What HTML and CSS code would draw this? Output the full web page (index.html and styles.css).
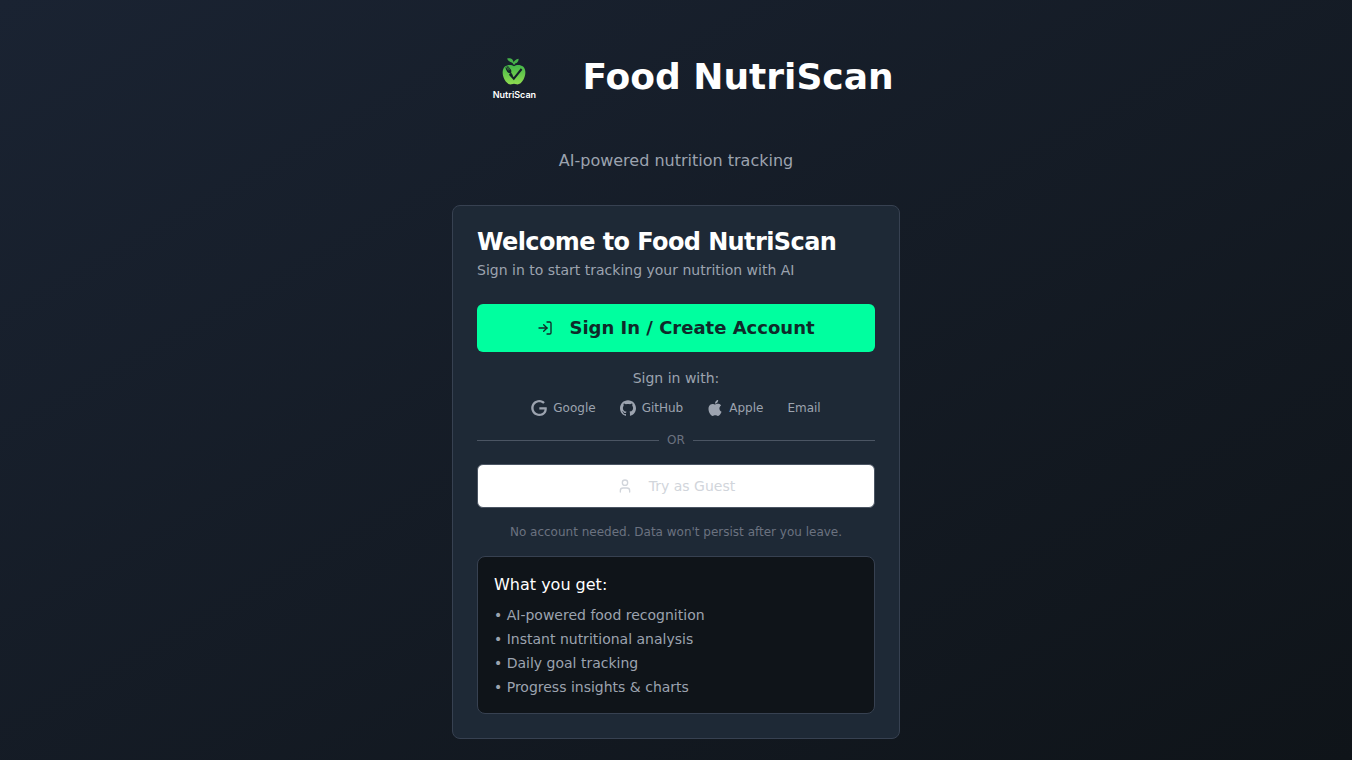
FILE: index.html
```
<!DOCTYPE html>
<html lang="en">
  <head>
    <meta charset="utf-8">
    <meta name="viewport" content="width=device-width, initial-scale=1.0">
    <title>Food NutriScan</title>
    <link rel="stylesheet" href="styles.css">
  </head>
  <body>
    <div class="page">
      <main class="container">
        <header class="hero">
          <div class="brand">
            <div class="logo">
              <svg class="logo-mark" viewBox="0 0 24 27" aria-hidden="true">
                <defs>
                  <linearGradient id="leaf" x1="0" y1="0" x2="0" y2="1">
                    <stop offset="0" stop-color="#43b649"/>
                    <stop offset="1" stop-color="#8fdc50"/>
                  </linearGradient>
                </defs>
                <path fill="#46b04a" d="M11.400 6.600C10.900 4.400 9 4.200 7.200 3.200 5.800 2.300 5.400 1.200 5.200.4c2-.3 4.200-.1 5.400 1.400.7.9.9 1.900 1 2.800C12.200 2.800 13.800 1.200 16.600.8c.2 2.500-1.400 4.200-3.400 4.700-.4.300-.5.700-.5 1.300z"/>
                <path fill="url(#leaf)" d="M12 8.200C9.800 6.600 5.600 6.200 2.900 8.600-.3 11.600.2 17.300 2.500 21.500c2 3.600 4.700 5.500 7.200 4.800.9-.3 1.500-.5 2.300-.5s1.400.2 2.300.5c2.500.7 5.200-1.200 7.200-4.800 2.300-4.200 2.800-9.900-.4-12.900-2.700-2.400-6.900-2-9.100-.4z"/>
                <path fill="none" stroke="#14202a" stroke-width="2" d="M7.600 16l4.200 4.600 7.800-9.600"/>
                <path fill="#14202a" d="M3.400 9.600l2.400-1.800 3 3.800c.7 1.100.7 2 .3 2.800l1.900 3-1 .7-2-2.900c-1.100.2-2-.2-2.600-1.100C4.600 12.800 3.900 11.300 3.400 9.600z"/>
                <path fill="none" stroke="#56be4a" stroke-width=".6" d="M4.200 9l2.400 3.400M5.200 8.200l2.400 3.400"/>
              </svg>
              <span class="logo-text">NutriScan</span>
            </div>
            <h1 class="title">Food NutriScan</h1>
          </div>
          <p class="tagline">AI-powered nutrition tracking</p>
        </header>

        <section class="card">
          <div class="card-header">
            <h2 class="card-title">Welcome to Food NutriScan</h2>
            <p class="card-desc">Sign in to start tracking your nutrition with AI</p>
          </div>

          <div class="card-content">
            <button class="btn btn-primary" type="button">
              <svg class="icon" viewBox="0 0 24 24" aria-hidden="true"><path d="M15 3h4a2 2 0 0 1 2 2v14a2 2 0 0 1-2 2h-4"/><path d="M10 17l5-5-5-5"/><path d="M15 12H3"/></svg>
              Sign In / Create Account
            </button>

            <div class="providers">
              <p class="providers-label">Sign in with:</p>
              <ul class="provider-list">
                <li class="provider">
                  <svg class="provider-icon" viewBox="0 0 24 24" aria-hidden="true"><path d="M12.480 10.920v3.280h7.840c-.24 1.840-.853 3.187-1.787 4.133-1.147 1.147-2.933 2.400-6.053 2.400-4.827 0-8.600-3.893-8.600-8.720s3.773-8.720 8.600-8.720c2.600 0 4.507 1.027 5.907 2.347l2.307-2.307C18.747 1.440 16.133 0 12.480 0 5.867 0 .307 5.387.307 12s5.560 12 12.173 12c3.573 0 6.267-1.173 8.373-3.360 2.160-2.160 2.840-5.213 2.840-7.667 0-.76-.053-1.467-.173-2.053H12.480z"/></svg>
                  Google
                </li>
                <li class="provider">
                  <svg class="provider-icon" viewBox="0 0 24 24" aria-hidden="true"><path d="M12 .297c-6.630 0-12 5.373-12 12 0 5.303 3.438 9.800 8.205 11.385.6.113.82-.258.82-.577 0-.285-.010-1.040-.015-2.040-3.338.724-4.042-1.610-4.042-1.610C4.422 18.070 3.633 17.700 3.633 17.700c-1.087-.744.084-.729.084-.729 1.205.084 1.838 1.236 1.838 1.236 1.070 1.835 2.809 1.305 3.495.998.108-.776.417-1.305.76-1.605-2.665-.3-5.466-1.332-5.466-5.930 0-1.310.465-2.380 1.235-3.220-.135-.303-.54-1.523.105-3.176 0 0 1.005-.322 3.300 1.230.96-.267 1.980-.399 3-.405 1.020.006 2.040.138 3 .405 2.280-1.552 3.285-1.230 3.285-1.230.645 1.653.24 2.873.12 3.176.765.840 1.230 1.910 1.230 3.220 0 4.610-2.805 5.625-5.475 5.920.42.360.81 1.096.81 2.220 0 1.606-.015 2.896-.015 3.286 0 .315.21.690.825.570C20.565 22.092 24 17.592 24 12.297c0-6.627-5.373-12-12-12"/></svg>
                  GitHub
                </li>
                <li class="provider">
                  <svg class="provider-icon" viewBox="0 0 24 24" aria-hidden="true"><path d="M12.152 6.896c-.948 0-2.415-1.078-3.960-1.040-2.040.027-3.910 1.183-4.961 3.014-2.117 3.675-.546 9.103 1.519 12.090 1.013 1.454 2.208 3.090 3.792 3.039 1.520-.065 2.090-.987 3.935-.987 1.831 0 2.350.987 3.960.948 1.637-.026 2.676-1.480 3.676-2.948 1.156-1.688 1.636-3.325 1.662-3.415-.039-.013-3.182-1.221-3.220-4.857-.026-3.040 2.480-4.494 2.597-4.559-1.429-2.090-3.623-2.324-4.390-2.376-2-.156-3.675 1.090-4.610 1.090zM15.530 3.830c.843-1.012 1.400-2.427 1.245-3.830-1.207.052-2.662.805-3.532 1.818-.78.896-1.454 2.338-1.273 3.714 1.338.104 2.715-.688 3.559-1.701"/></svg>
                  Apple
                </li>
                <li class="provider">Email</li>
              </ul>
            </div>

            <div class="divider">OR</div>

            <button class="btn btn-guest" type="button">
              <svg class="icon" viewBox="0 0 24 24" aria-hidden="true"><path d="M19 21v-2a4 4 0 0 0-4-4H9a4 4 0 0 0-4 4v2"/><circle cx="12" cy="7" r="4"/></svg>
              Try as Guest
            </button>

            <p class="note">No account needed. Data won't persist after you leave.</p>

            <div class="features">
              <h3 class="features-title">What you get:</h3>
              <ul class="features-list">
                <li>• AI-powered food recognition</li>
                <li>• Instant nutritional analysis</li>
                <li>• Daily goal tracking</li>
                <li>• Progress insights &amp; charts</li>
              </ul>
            </div>
          </div>
        </section>
      </main>
    </div>
  </body>
</html>
```
FILE: styles.css
```
* {
  box-sizing: border-box;
  margin: 0;
  padding: 0;
}
body {
  background-color: #0f1419;
  color: white;
  font-family: "DejaVu Sans", sans-serif;
  font-size: 16px;
  line-height: 24px;
}
ul {
  list-style: none;
}
.page {
  min-height: 100vh;
  padding: 16px;
  background: linear-gradient(to bottom right, #1a2332, #0f1419);
}
.container {
  max-width: 448px;
  margin: 0 auto;
}

/* logo and page heading */
.hero {
  text-align: center;
  margin-bottom: 32px;
}
.brand {
  display: flex;
  align-items: center;
  justify-content: center;
  gap: 12px;
  height: 121px;
  margin-bottom: 12px;
}
.logo {
  display: flex;
  flex-direction: column;
  align-items: center;
  width: 112px;
  padding-top: 5px;
  gap: 4px;
}
.logo-mark {
  width: 24px;
  height: 27px;
}
.logo-text {
  font-family: Inter, sans-serif;
  font-size: 9px;
  font-weight: 600;
  line-height: 12px;
}
.title {
  font-size: 36px;
  font-weight: 700;
  line-height: 40px;
}
.tagline {
  color: #9ca3af;
}

/* sign in card */
.card {
  background-color: #1e2936;
  border: 1px solid #374151;
  border-radius: 8px;
  padding: 24px;
}
.card-title {
  font-size: 24px;
  font-weight: 700;
  line-height: 24px;
  letter-spacing: -0.6px;
}
.card-desc {
  margin-top: 6px;
  color: #9ca3af;
  font-size: 14px;
  line-height: 20px;
}
.card-content {
  display: flex;
  flex-direction: column;
  gap: 16px;
  margin-top: 24px;
}
.btn {
  display: flex;
  align-items: center;
  justify-content: center;
  gap: 16px;
  width: 100%;
  border: 0;
  border-radius: 6px;
  font-family: inherit;
  cursor: pointer;
}
.btn-primary {
  height: 48px;
  background-color: #00ff9f;
  color: #0f2a2a;
  font-size: 18px;
  font-weight: 700;
  line-height: 28px;
}
.btn-guest {
  height: 44px;
  background-color: white;
  border: 1px solid #4b5563;
  color: #d1d5db;
  font-size: 14px;
  line-height: 20px;
}
.icon {
  width: 16px;
  height: 16px;
  fill: none;
  stroke: currentColor;
  stroke-width: 2;
  stroke-linecap: round;
  stroke-linejoin: round;
}
.providers {
  color: #9ca3af;
  text-align: center;
}
.providers-label {
  font-size: 14px;
  line-height: 20px;
}
.provider-list {
  display: flex;
  justify-content: center;
  gap: 24px;
  margin-top: 12px;
}
.provider {
  display: flex;
  align-items: center;
  gap: 6px;
  font-size: 12px;
  line-height: 16px;
}
.provider-icon {
  width: 16px;
  height: 16px;
  fill: currentColor;
}
.divider {
  display: flex;
  align-items: center;
  gap: 8px;
  color: #6b7280;
  font-size: 12px;
  line-height: 16px;
}
.divider::before, .divider::after {
  content: "";
  flex: 1;
  height: 1px;
  background-color: #4b5563;
}
.note {
  color: #6b7280;
  font-size: 12px;
  line-height: 16px;
  text-align: center;
}
.features {
  background-color: #0f1419;
  border: 1px solid #374151;
  border-radius: 8px;
  padding: 16px;
}
.features-title {
  font-size: 16px;
  font-weight: 500;
  line-height: 24px;
  margin-bottom: 8px;
}
.features-list {
  display: flex;
  flex-direction: column;
  gap: 4px;
  color: #9ca3af;
  font-size: 14px;
  line-height: 20px;
}
```
